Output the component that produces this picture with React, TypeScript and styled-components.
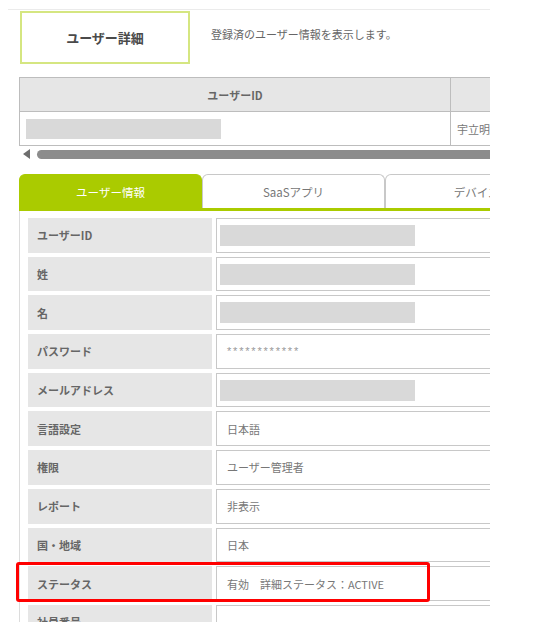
import styled, { createGlobalStyle } from 'styled-components';

const GlobalStyle = createGlobalStyle`
  body {
    margin: 8px;
    background: #fff;
    font-family: "Noto Sans CJK JP", "Noto Sans", sans-serif;
  }
`;

const Page = styled.div`
  width: 482px;
  height: 612px;
  overflow: hidden;
  border-top: 1px solid #ebebeb;
  margin-top: 1px;
`;

const Header = styled.div`
  display: flex;
  align-items: center;
  gap: 21px;
  margin: 1px 0 0 12px;
`;

const TitleBox = styled.div`
  box-sizing: border-box;
  width: 170px;
  height: 53px;
  border: 2px solid #d5e681;
  display: flex;
  align-items: center;
  justify-content: center;
  font-size: 13px;
  font-weight: 700;
  color: #4a4a4a;
`;

const Description = styled.div`
  font-size: 11px;
  color: #666;
  margin-top: -8px;
`;

const TableWrap = styled.div`
  margin: 13px 0 0 11px;
  width: 700px;
`;

const Table = styled.table`
  border-collapse: collapse;
  font-size: 11px;
  color: #666;
`;

const Th = styled.th<{ w: number }>`
  width: ${(p) => p.w}px;
  height: 33px;
  background: #e6e6e6;
  border: 1px solid #bdbdbd;
  font-weight: 700;
  padding: 0;
`;

const Td = styled.td`
  height: 33px;
  border: 1px solid #bdbdbd;
  padding: 0 6px;
  font-weight: 400;
  color: #777;
`;

const Blank = styled.div<{ w: number; h: number }>`
  width: ${(p) => p.w}px;
  height: ${(p) => p.h}px;
  background: #d9d9d9;
`;

const ScrollBar = styled.div`
  display: flex;
  align-items: center;
  gap: 7px;
  height: 10px;
  margin: 3px 0 0 4px;
`;

const Arrow = styled.div`
  width: 0;
  height: 0;
  border-top: 5px solid transparent;
  border-bottom: 5px solid transparent;
  border-right: 7px solid #6e6e6e;
`;

const Thumb = styled.div`
  flex: 1;
  height: 9px;
  border-radius: 5px 0 0 5px;
  background: #8c8c8c;
`;

const Tabs = styled.div`
  display: flex;
  margin: 15px 0 0 11px;
  width: 700px;
  border-bottom: 3px solid #aacb00;
`;

const Tab = styled.div<{ active?: boolean }>`
  box-sizing: border-box;
  width: 183px;
  height: 34px;
  display: flex;
  align-items: center;
  justify-content: center;
  font-size: 11.5px;
  border: 1px solid ${(p) => (p.active ? '#aacb00' : '#c8c8c8')};
  border-bottom: none;
  border-radius: 6px 6px 0 0;
  background: ${(p) => (p.active ? '#aacb00' : '#fff')};
  color: ${(p) => (p.active ? '#fff' : '#777')};
`;

const Panel = styled.div`
  position: relative;
  margin-left: 11px;
  border-left: 1px solid #dcdcdc;
  padding: 7px 0 0 8px;
  display: flex;
  flex-direction: column;
  gap: 4px;
`;

const Row = styled.div`
  display: flex;
  gap: 4px;
  height: 34.7px;
`;

const Label = styled.div`
  width: 184px;
  flex-shrink: 0;
  background: #e6e6e6;
  display: flex;
  align-items: center;
  padding-left: 9px;
  box-sizing: border-box;
  font-size: 11px;
  font-weight: 700;
  color: #666;
`;

const Value = styled.div`
  width: 400px;
  flex-shrink: 0;
  box-sizing: border-box;
  border: 1px solid #c8c8c8;
  display: flex;
  align-items: center;
  padding-left: 3px;
`;

const ValueText = styled.span<{ masked?: boolean }>`
  padding-left: 7px;
  font-family: ${(p) => (p.masked ? '"Liberation Sans", sans-serif' : 'inherit')};
  font-size: 11px;
  letter-spacing: ${(p) => (p.masked ? '1.8px' : '0')};
  color: ${(p) => (p.masked ? '#999' : '#777')};
`;

const Highlight = styled.div`
  position: absolute;
  left: -4px;
  top: 351px;
  width: 414px;
  height: 40px;
  box-sizing: border-box;
  border: 3px solid #ff0000;
  border-radius: 3px;
`;

type Field = { label: string; value?: string; blank?: boolean; masked?: boolean };

const fields: Field[] = [
  { label: 'ユーザーID', blank: true },
  { label: '姓', blank: true },
  { label: '名', blank: true },
  { label: 'パスワード', value: '************', masked: true },
  { label: 'メールアドレス', blank: true },
  { label: '言語設定', value: '日本語' },
  { label: '権限', value: 'ユーザー管理者' },
  { label: 'レポート', value: '非表示' },
  { label: '国・地域', value: '日本' },
  { label: 'ステータス', value: '有効　詳細ステータス：ACTIVE' },
  { label: '社員番号', value: '' },
];

export default function App() {
  return (
    <>
      <GlobalStyle />
      <Page>
        <Header>
          <TitleBox>ユーザー詳細</TitleBox>
          <Description>登録済のユーザー情報を表示します。</Description>
        </Header>

        <TableWrap>
          <Table>
            <thead>
              <tr>
                <Th w={430}>ユーザーID</Th>
                <Th w={200}></Th>
              </tr>
            </thead>
            <tbody>
              <tr>
                <Td>
                  <Blank w={195} h={20} />
                </Td>
                <Td>宇立明</Td>
              </tr>
            </tbody>
          </Table>
          <ScrollBar>
            <Arrow />
            <Thumb />
          </ScrollBar>
        </TableWrap>

        <Tabs>
          <Tab active>ユーザー情報</Tab>
          <Tab>SaaSアプリ</Tab>
          <Tab>デバイス</Tab>
        </Tabs>

        <Panel>
          {fields.map((f) => (
            <Row key={f.label}>
              <Label>{f.label}</Label>
              <Value>
                {f.blank ? (
                  <Blank w={195} h={21} />
                ) : (
                  <ValueText masked={f.masked}>{f.value}</ValueText>
                )}
              </Value>
            </Row>
          ))}
          <Highlight />
        </Panel>
      </Page>
    </>
  );
}
